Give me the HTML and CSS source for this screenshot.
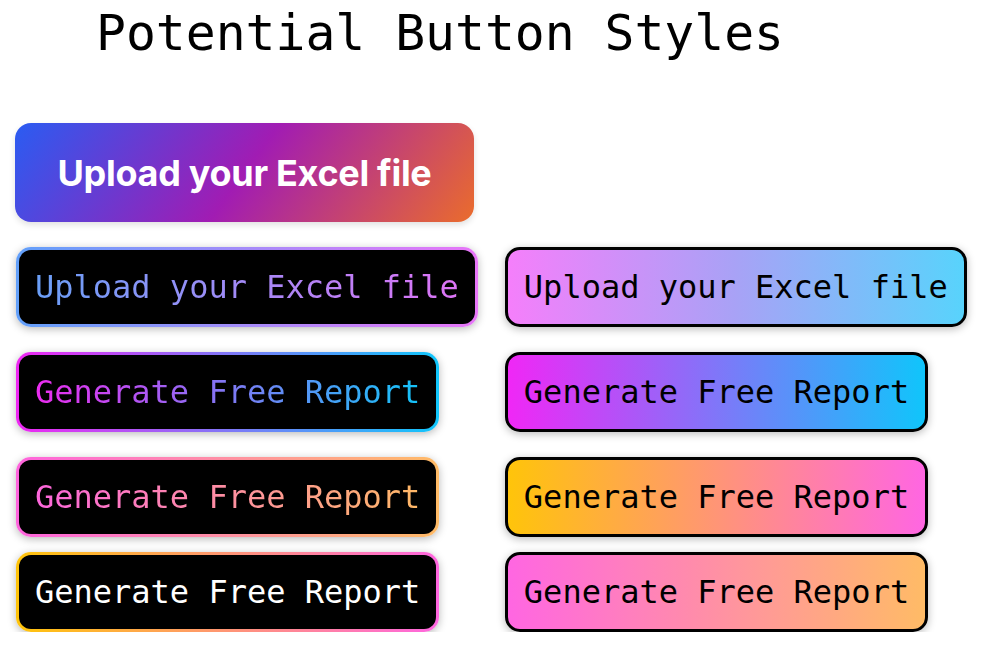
FILE: index.html
```html
<!DOCTYPE html>
<html lang="en">
<head>
<meta charset="utf-8">
<title>Potential Button Styles</title>
<link rel="stylesheet" href="styles.css">
</head>
<body>
<main class="page">
  <h1 class="title">Potential Button Styles</h1>
  <div class="grid">
    <button class="btn-hero spaced">Upload your Excel file</button>
    <div class="empty spaced"></div>

    <button class="btn outline g-blue-fuchsia spaced"><span class="gtext g-blue-fuchsia-text">Upload your Excel file</span></button>
    <button class="btn filled f-pink-cyan spaced">Upload your Excel file</button>

    <button class="btn outline g-fuchsia-cyan spaced"><span class="gtext g-fuchsia-cyan-text">Generate Free Report</span></button>
    <button class="btn filled f-fuchsia-cyan spaced">Generate Free Report</button>

    <button class="btn outline g-pink-orange"><span class="gtext g-pink-orange-text">Generate Free Report</span></button>
    <button class="btn filled f-yellow-pink">Generate Free Report</button>

    <button class="btn outline g-yellow-pink"><span class="white-text">Generate Free Report</span></button>
    <button class="btn filled f-pink-orange">Generate Free Report</button>
  </div>
</main>
</body>
</html>
```

FILE: styles.css
```css
html, body {
  margin: 0;
  padding: 0;
  background: #ffffff;
}

.page {
  padding: 3px 0 0 16px;
}

.title {
  margin: 0 0 60px 80px;
  font-family: "DejaVu Sans Mono", "Liberation Mono", monospace;
  font-weight: 400;
  font-size: 49.7px;
  line-height: 60px;
  color: #000;
}

.grid {
  display: grid;
  grid-template-columns: max-content max-content;
  column-gap: 27px;
  row-gap: 15px;
  align-items: start;
  justify-items: start;
}

.spaced {
  margin-bottom: 10px;
}

.btn-hero {
  width: 459px;
  margin-left: -1px;
  height: 99px;
  border: none;
  border-radius: 16px;
  background: linear-gradient(126deg, #2a5cf2 0%, #a11cb3 50%, #ea6c2c 100%);
  color: #fff;
  font-family: Inter, "Noto Sans", sans-serif;
  font-weight: 700;
  font-size: 36px;
  letter-spacing: -0.3px;
  box-shadow: 0 3px 6px rgba(0, 0, 0, 0.12);
  padding: 0;
}

.btn {
  display: block;
  border: 3px solid transparent;
  border-radius: 15px;
  padding: 16px 16px;
  font-family: "DejaVu Sans Mono", "Liberation Mono", monospace;
  font-size: 32px;
  line-height: 42px;
  white-space: nowrap;
  box-shadow: 0 2px 9px rgba(0, 0, 0, 0.28);
  color: #000;
  text-align: left;
}

.btn.filled {
  border-color: #000;
}

.gtext {
  -webkit-background-clip: text;
  background-clip: text;
  color: transparent;
}

.white-text {
  color: #fff;
}

/* outlined: gradient border, black body */
.g-blue-fuchsia {
  background: linear-gradient(#000, #000) padding-box,
              linear-gradient(to right, #62a0fa, #e876f8) border-box;
}
.g-blue-fuchsia-text {
  background-image: linear-gradient(to right, #6a9ff7, #de74f6);
}

.g-fuchsia-cyan {
  background: linear-gradient(#000, #000) padding-box,
              linear-gradient(to right, #ef27f3, #10c6fb) border-box;
}
.g-fuchsia-cyan-text {
  background-image: linear-gradient(to right, #ec2cf0, #14c3f8);
}

.g-pink-orange {
  background: linear-gradient(#000, #000) padding-box,
              linear-gradient(to right, #ff64de, #ffbb66) border-box;
}
.g-pink-orange-text {
  background-image: linear-gradient(to right, #fd66dc, #ffb866);
}

.g-yellow-pink {
  background: linear-gradient(#000, #000) padding-box,
              linear-gradient(to right, #ffc40a, #ff66e0) border-box;
}

/* filled: gradient body, black border */
.f-pink-cyan {
  background: linear-gradient(to right, #f57ffb, #a8a2f6 50%, #58d3fc);
}
.f-fuchsia-cyan {
  background: linear-gradient(to right, #f027f6, #10c5fb);
}
.f-yellow-pink {
  background: linear-gradient(to right, #ffc40a, #ff66e2);
}
.f-pink-orange {
  background: linear-gradient(to right, #ff66e2, #ffbb66);
}
```
